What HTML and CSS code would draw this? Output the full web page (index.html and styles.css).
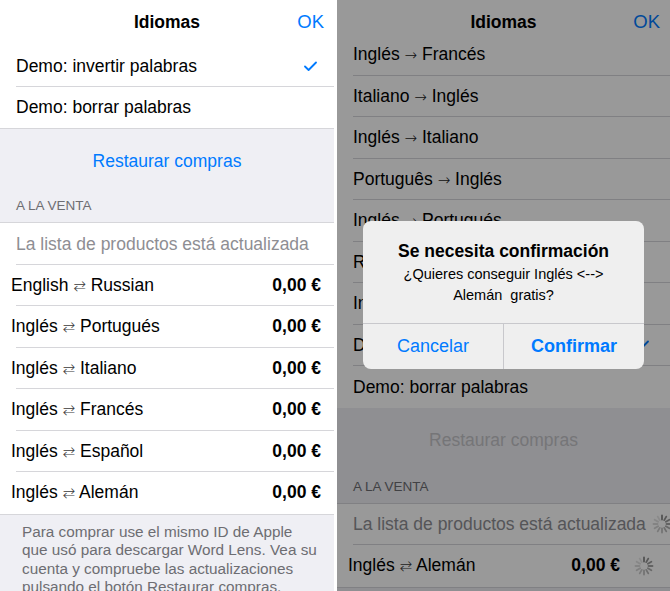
FILE: index.html
```html
<!DOCTYPE html>
<html lang="es">
<head>
<meta charset="utf-8">
<title>Idiomas</title>
<link rel="stylesheet" href="styles.css">
</head>
<body>
<div class="page">
  <section class="screen screen-left">
    <header class="nav">
      <span class="nav-title">Idiomas</span>
      <span class="nav-ok">OK</span>
    </header>
    <div class="group group-top">
      <div class="row sep"><span class="label">Demo: invertir palabras</span>
        <svg class="check" width="13" height="10" viewBox="0 0 13 10"><path d="M1 5.5 L4.6 9 L12 1.5" fill="none" stroke="#007aff" stroke-width="1.8" stroke-linecap="round" stroke-linejoin="round"/></svg>
      </div>
      <div class="row"><span class="label">Demo: borrar palabras</span></div>
    </div>
    <div class="gray-section">
      <div class="restore">Restaurar compras</div>
      <div class="sec-header">A LA VENTA</div>
    </div>
    <div class="group group-list">
      <div class="row sep"><span class="label muted">La lista de productos está actualizada</span></div>
      <div class="row sep product"><span class="label">English <span class="arr">⇄</span> Russian</span><span class="price">0,00 €</span></div>
      <div class="row sep product"><span class="label">Inglés <span class="arr">⇄</span> Portugués</span><span class="price">0,00 €</span></div>
      <div class="row sep product"><span class="label">Inglés <span class="arr">⇄</span> Italiano</span><span class="price">0,00 €</span></div>
      <div class="row sep product"><span class="label">Inglés <span class="arr">⇄</span> Francés</span><span class="price">0,00 €</span></div>
      <div class="row sep product"><span class="label">Inglés <span class="arr">⇄</span> Español</span><span class="price">0,00 €</span></div>
      <div class="row product"><span class="label">Inglés <span class="arr">⇄</span> Alemán</span><span class="price">0,00 €</span></div>
    </div>
    <p class="footer-note">Para comprar use el mismo ID de Apple<br>que usó para descargar Word Lens. Vea su<br>cuenta y compruebe las actualizaciones<br>pulsando el botón Restaurar compras.</p>
  </section>

  <section class="screen screen-right">
    <header class="nav nav-short">
      <span class="nav-title">Idiomas</span>
      <span class="nav-ok">OK</span>
    </header>
    <div class="group">
      <div class="row sep"><span class="label">Inglés <span class="arr arr-r">→</span> Francés</span></div>
      <div class="row sep"><span class="label">Italiano <span class="arr arr-r">→</span> Inglés</span></div>
      <div class="row sep"><span class="label">Inglés <span class="arr arr-r">→</span> Italiano</span></div>
      <div class="row sep"><span class="label">Português <span class="arr arr-r">→</span> Inglés</span></div>
      <div class="row sep"><span class="label">Inglés <span class="arr arr-r">→</span> Portugués</span></div>
      <div class="row sep"><span class="label">Russian <span class="arr arr-r">→</span> Inglés</span></div>
      <div class="row sep"><span class="label">Inglés <span class="arr arr-r">→</span> Russian</span></div>
      <div class="row sep"><span class="label">Demo: invertir palabras</span>
        <svg class="check check-r" width="13" height="10" viewBox="0 0 13 10"><path d="M1 5.5 L4.6 9 L12 1.5" fill="none" stroke="#007aff" stroke-width="1.8" stroke-linecap="round" stroke-linejoin="round"/></svg>
      </div>
      <div class="row"><span class="label">Demo: borrar palabras</span></div>
    </div>
    <div class="gray-section gray-section-r">
      <div class="restore restore-disabled">Restaurar compras</div>
      <div class="sec-header">A LA VENTA</div>
    </div>
    <div class="group group-list">
      <div class="row sep row-acc"><span class="label muted">La lista de productos está actualizada</span>
        <svg class="spinner" width="20" height="20" viewBox="-10 -10 20 20">
          <g stroke="#8a8a8a" stroke-width="1.8" stroke-linecap="round">
            <line x1="0" y1="-4.5" x2="0" y2="-8.5" opacity="1"/>
            <line x1="0" y1="-4.5" x2="0" y2="-8.5" opacity="0.92" transform="rotate(30)"/>
            <line x1="0" y1="-4.5" x2="0" y2="-8.5" opacity="0.84" transform="rotate(60)"/>
            <line x1="0" y1="-4.5" x2="0" y2="-8.5" opacity="0.76" transform="rotate(90)"/>
            <line x1="0" y1="-4.5" x2="0" y2="-8.5" opacity="0.68" transform="rotate(120)"/>
            <line x1="0" y1="-4.5" x2="0" y2="-8.5" opacity="0.6" transform="rotate(150)"/>
            <line x1="0" y1="-4.5" x2="0" y2="-8.5" opacity="0.52" transform="rotate(180)"/>
            <line x1="0" y1="-4.5" x2="0" y2="-8.5" opacity="0.44" transform="rotate(210)"/>
            <line x1="0" y1="-4.5" x2="0" y2="-8.5" opacity="0.36" transform="rotate(240)"/>
            <line x1="0" y1="-4.5" x2="0" y2="-8.5" opacity="0.3" transform="rotate(270)"/>
            <line x1="0" y1="-4.5" x2="0" y2="-8.5" opacity="0.25" transform="rotate(300)"/>
            <line x1="0" y1="-4.5" x2="0" y2="-8.5" opacity="0.2" transform="rotate(330)"/>
          </g>
        </svg>
      </div>
      <div class="row product row-acc"><span class="label">Inglés <span class="arr">⇄</span> Alemán</span><span class="price">0,00 €</span>
        <svg class="spinner" width="20" height="20" viewBox="-10 -10 20 20">
          <g stroke="#8a8a8a" stroke-width="1.8" stroke-linecap="round">
            <line x1="0" y1="-4.5" x2="0" y2="-8.5" opacity="1"/>
            <line x1="0" y1="-4.5" x2="0" y2="-8.5" opacity="0.92" transform="rotate(30)"/>
            <line x1="0" y1="-4.5" x2="0" y2="-8.5" opacity="0.84" transform="rotate(60)"/>
            <line x1="0" y1="-4.5" x2="0" y2="-8.5" opacity="0.76" transform="rotate(90)"/>
            <line x1="0" y1="-4.5" x2="0" y2="-8.5" opacity="0.68" transform="rotate(120)"/>
            <line x1="0" y1="-4.5" x2="0" y2="-8.5" opacity="0.6" transform="rotate(150)"/>
            <line x1="0" y1="-4.5" x2="0" y2="-8.5" opacity="0.52" transform="rotate(180)"/>
            <line x1="0" y1="-4.5" x2="0" y2="-8.5" opacity="0.44" transform="rotate(210)"/>
            <line x1="0" y1="-4.5" x2="0" y2="-8.5" opacity="0.36" transform="rotate(240)"/>
            <line x1="0" y1="-4.5" x2="0" y2="-8.5" opacity="0.3" transform="rotate(270)"/>
            <line x1="0" y1="-4.5" x2="0" y2="-8.5" opacity="0.25" transform="rotate(300)"/>
            <line x1="0" y1="-4.5" x2="0" y2="-8.5" opacity="0.2" transform="rotate(330)"/>
          </g>
        </svg>
      </div>
    </div>
    <div class="footer-fill"></div>

    <div class="dim"></div>
    <div class="alert">
      <div class="alert-body">
        <div class="alert-title">Se necesita confirmación</div>
        <div class="alert-msg">¿Quieres conseguir Inglés &lt;--&gt;<br>Alemán&nbsp; gratis?</div>
      </div>
      <div class="alert-buttons">
        <div class="alert-btn">Cancelar</div>
        <div class="alert-btn alert-btn-bold">Confirmar</div>
      </div>
    </div>
  </section>
</div>
</body>
</html>
```

FILE: styles.css
```css
* { box-sizing: border-box; margin: 0; padding: 0; }

html, body {
  width: 670px;
  height: 591px;
  overflow: hidden;
  background: #ffffff;
}

body {
  font-family: "Liberation Sans", Arial, "DejaVu Sans", sans-serif;
  color: #000;
  font-size: 17.5px;
}

.page {
  display: flex;
  gap: 3px;
  width: 670px;
  height: 591px;
}

.screen {
  display: flex;
  flex-direction: column;
  height: 591px;
  overflow: hidden;
  background: #efeff4;
}

.screen-left { width: 334px; }

.screen-right {
  width: 333px;
  position: relative;
  background: #ffffff;
}

/* nav */
.nav {
  height: 45px;
  flex: none;
  display: flex;
  align-items: center;
  justify-content: center;
  position: relative;
  background: #ffffff;
  padding-bottom: 2px;
}

.nav-short {
  height: 34px;
  align-items: flex-start;
  padding-top: 11px;
  padding-bottom: 0;
  overflow: visible;
}

.nav-title {
  font-weight: bold;
  font-size: 17.5px;
  line-height: 22px;
}

.nav-ok {
  position: absolute;
  right: 10px;
  color: #007aff;
  font-size: 18.5px;
  line-height: 22px;
}

.nav-short .nav-ok { top: 11px; }

/* rows */
.group {
  background: #ffffff;
  flex: none;
}

.group-top { border-bottom: 1px solid #d6d6da; }

.group-list {
  border-top: 1px solid #d6d6da;
  border-bottom: 1px solid #d6d6da;
}

.row {
  height: 41.5px;
  display: flex;
  align-items: center;
  padding: 0 13px 0 16px;
}

.row.sep {
  background: linear-gradient(#d6d6da, #d6d6da) no-repeat 16px 100% / calc(100% - 16px) 1px;
}

.row.product { padding-left: 11px; }

.label {
  flex: 1;
  white-space: nowrap;
  line-height: 22px;
}

.label.muted { color: #8e8e93; }

.arr {
  font-family: "DejaVu Sans", sans-serif;
  font-size: 15px;
  color: #3a3a3a;
  font-weight: 200;
}

.arr-r { color: #222; }

.price {
  font-weight: bold;
  white-space: nowrap;
}

.check { margin-right: 4px; }

.check-r { margin-right: 8px; }

/* gray section */
.gray-section {
  height: 93px;
  flex: none;
  background: #efeff4;
  display: flex;
  flex-direction: column;
}

.gray-section-r { height: 95px; }

.restore {
  color: #007aff;
  text-align: center;
  line-height: 22px;
  margin-top: 21px;
}

.restore-disabled { color: #c4c4c8; }

.sec-header {
  color: #6d6d72;
  font-size: 13.5px;
  line-height: 16px;
  padding-left: 16px;
  margin-top: 26px;
}

.gray-section-r .sec-header { margin-top: 28px; }

/* footer */
.footer-note {
  color: #6d6d72;
  font-size: 15.3px;
  line-height: 18.6px;
  padding: 8px 4px 0 22px;
  background: #efeff4;
  flex: 1;
  white-space: nowrap;
}

.footer-fill {
  flex: 1;
  background: #efeff4;
}

.row-acc { padding-right: 16px; }

.spinner { flex: none; margin-left: 14px; }

.row-acc .label.muted + .spinner { margin-left: 6px; }

/* dim overlay & alert */
.dim {
  position: absolute;
  inset: 0;
  background: rgba(0, 0, 0, 0.4);
}

.alert {
  position: absolute;
  left: 26px;
  top: 221px;
  width: 281px;
  height: 148px;
  border-radius: 8px;
  background: #efefef;
  display: flex;
  flex-direction: column;
  overflow: hidden;
}

.alert-body {
  flex: 1;
  text-align: center;
  padding-top: 19px;
}

.alert-title {
  font-weight: bold;
  font-size: 17.5px;
  line-height: 22px;
}

.alert-msg {
  font-size: 14.5px;
  line-height: 21px;
  margin-top: 2px;
}

.alert-buttons {
  height: 46px;
  flex: none;
  display: flex;
  border-top: 1px solid #c8c8cc;
}

.alert-btn {
  flex: 1;
  display: flex;
  align-items: center;
  justify-content: center;
  color: #007aff;
  font-size: 18px;
}

.alert-btn + .alert-btn { border-left: 1px solid #c8c8cc; }

.alert-btn-bold { font-weight: bold; }
```
